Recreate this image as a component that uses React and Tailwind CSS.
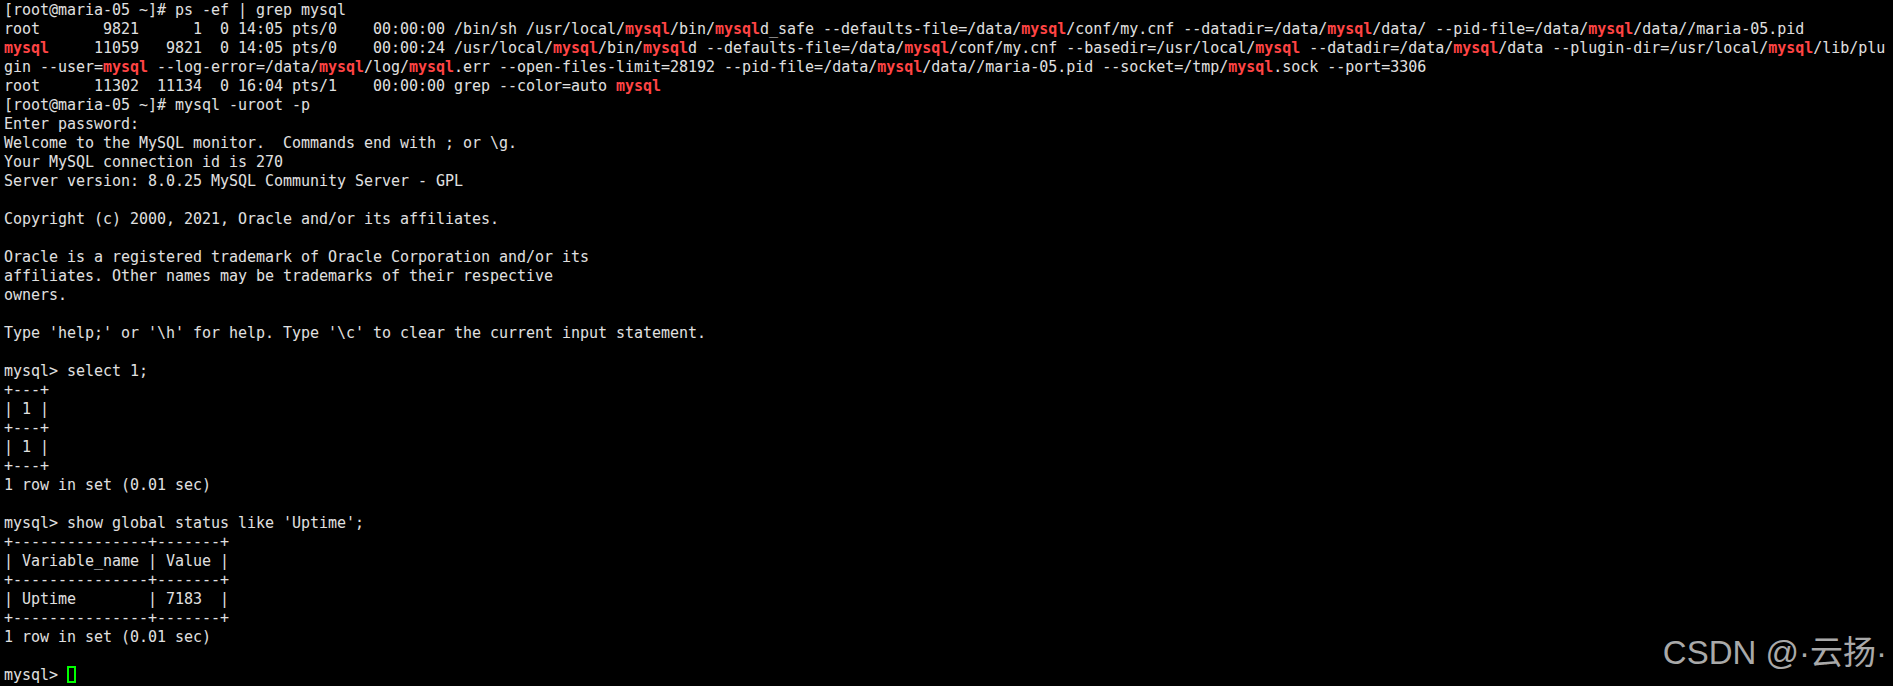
import React from 'react';

// ps output lines get grep's red highlight on every "mysql"
const LINES = [
  { t: '[root@maria-05 ~]# ps -ef | grep mysql' },
  { t: 'root       9821      1  0 14:05 pts/0    00:00:00 /bin/sh /usr/local/mysql/bin/mysqld_safe --defaults-file=/data/mysql/conf/my.cnf --datadir=/data/mysql/data/ --pid-file=/data/mysql/data//maria-05.pid', hl: true },
  { t: 'mysql     11059   9821  0 14:05 pts/0    00:00:24 /usr/local/mysql/bin/mysqld --defaults-file=/data/mysql/conf/my.cnf --basedir=/usr/local/mysql --datadir=/data/mysql/data --plugin-dir=/usr/local/mysql/lib/plu', hl: true },
  { t: 'gin --user=mysql --log-error=/data/mysql/log/mysql.err --open-files-limit=28192 --pid-file=/data/mysql/data//maria-05.pid --socket=/tmp/mysql.sock --port=3306', hl: true },
  { t: 'root      11302  11134  0 16:04 pts/1    00:00:00 grep --color=auto mysql', hl: true },
  { t: '[root@maria-05 ~]# mysql -uroot -p' },
  { t: 'Enter password:' },
  { t: 'Welcome to the MySQL monitor.  Commands end with ; or \\g.' },
  { t: 'Your MySQL connection id is 270' },
  { t: 'Server version: 8.0.25 MySQL Community Server - GPL' },
  { t: '' },
  { t: 'Copyright (c) 2000, 2021, Oracle and/or its affiliates.' },
  { t: '' },
  { t: 'Oracle is a registered trademark of Oracle Corporation and/or its' },
  { t: 'affiliates. Other names may be trademarks of their respective' },
  { t: 'owners.' },
  { t: '' },
  { t: "Type 'help;' or '\\h' for help. Type '\\c' to clear the current input statement." },
  { t: '' },
  { t: 'mysql> select 1;' },
  { t: '+---+' },
  { t: '| 1 |' },
  { t: '+---+' },
  { t: '| 1 |' },
  { t: '+---+' },
  { t: '1 row in set (0.01 sec)' },
  { t: '' },
  { t: "mysql> show global status like 'Uptime';" },
  { t: '+---------------+-------+' },
  { t: '| Variable_name | Value |' },
  { t: '+---------------+-------+' },
  { t: '| Uptime        | 7183  |' },
  { t: '+---------------+-------+' },
  { t: '1 row in set (0.01 sec)' },
  { t: '' },
];

const Line = ({ t, hl }) => {
  if (!hl) return <div className="h-[19px] whitespace-pre">{t || ' '}</div>;
  const parts = t.split('mysql');
  return (
    <div className="h-[19px] whitespace-pre">
      {parts.map((p, i) => (
        <React.Fragment key={i}>
          {p}
          {i < parts.length - 1 && <span className="font-bold text-[#ff4444]">mysql</span>}
        </React.Fragment>
      ))}
    </div>
  );
};

export default function App() {
  return (
    <div className="relative h-[686px] w-full overflow-hidden bg-black">
      <div
        className="pl-1 pt-px text-[15px] leading-[19px] tracking-[-0.03px] text-[#e0e0e0]"
        style={{ fontFamily: '"DejaVu Sans Mono", monospace' }}
      >
        {LINES.map((l, i) => <Line key={i} {...l} />)}
        <div className="h-[19px] whitespace-pre">
          {'mysql> '}
          <span className="inline-block h-[17px] w-[9px] align-top border-2 border-[#00ff00]" />
        </div>
      </div>

      {/* watermark */}
      <div
        className="absolute right-[6px] top-[633px] text-[33px] leading-[40px] text-[#a9a9a9]"
        style={{ fontFamily: '"Liberation Sans", "Noto Sans CJK SC", sans-serif' }}
      >
        CSDN @·云扬·
      </div>
    </div>
  );
}
